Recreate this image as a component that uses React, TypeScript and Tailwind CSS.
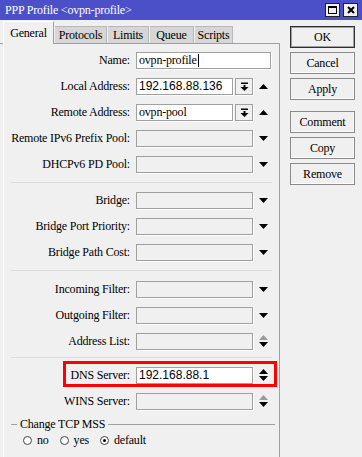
import React from "react"

type ArrowKind = "down" | "up" | "both" | "grayBoth" | "none"

function Down({ color = "#000" }: { color?: string }) {
  return (
    <svg width="9" height="5" viewBox="0 0 9 5">
      <polygon points="0,0 9,0 4.5,5" fill={color} />
    </svg>
  )
}

function Up({ color = "#000" }: { color?: string }) {
  return (
    <svg width="9" height="5" viewBox="0 0 9 5">
      <polygon points="0,5 9,5 4.5,0" fill={color} />
    </svg>
  )
}

function Arrows({ kind }: { kind: ArrowKind }) {
  return (
    <div className="ml-[3px] w-[14px] flex flex-col items-center justify-center gap-[2px]">
      {kind === "down" && <Down />}
      {kind === "up" && <Up />}
      {kind === "both" && (
        <>
          <Up />
          <Down />
        </>
      )}
      {kind === "grayBoth" && (
        <>
          <Up color="#9a9a9a" />
          <Down />
        </>
      )}
    </div>
  )
}

function DropButton() {
  return (
    <div className="ml-[2px] w-[18px] h-[17px] border border-[#a0a0a0] shadow-[1px_1px_0_#fff] flex items-center justify-center">
      <svg width="9" height="9" viewBox="0 0 9 9">
        <rect x="1" y="0.5" width="7" height="1.5" fill="#000" />
        <rect x="3.5" y="3" width="2" height="2.5" fill="#000" />
        <polygon points="0.5,5 8.5,5 4.5,9" fill="#000" />
      </svg>
    </div>
  )
}

interface RowProps {
  label: string
  value?: string
  sans?: boolean
  drop?: boolean
  arrows?: ArrowKind
  cursor?: boolean
}

function Row({ label, value, sans, drop, arrows = "down", cursor }: RowProps) {
  const filled = value !== undefined
  return (
    <div className="relative flex items-center h-[26px]">
      <div className="w-[126px] text-right whitespace-nowrap">{label}:</div>
      <div
        className={`ml-[6px] h-[17px] border border-[#a0a0a0] shadow-[1px_1px_0_#fff] flex items-center px-[2px] whitespace-nowrap overflow-hidden ${
          filled ? "bg-white" : "bg-[#f0f0f0]"
        } ${drop ? "w-[97px]" : arrows === "none" ? "w-[135px]" : "w-[117px]"} ${
          sans ? "font-['Liberation_Sans',sans-serif] tracking-normal" : ""
        }`}
      >
        {value}
        {cursor && <span className="inline-block w-px h-[13px] bg-black ml-px" />}
      </div>
      {drop && <DropButton />}
      {arrows !== "none" && <Arrows kind={arrows} />}
    </div>
  )
}

function Sep({ className }: { className: string }) {
  return <div className={`ml-[7px] w-[261px] h-px bg-[#dcdcdc] ${className}`} />
}

function Radio({ label, checked }: { label: string; checked?: boolean }) {
  return (
    <div className="flex items-center gap-[5px]">
      <div className="w-[9px] h-[9px] rounded-full border border-[#444] bg-white flex items-center justify-center">
        {checked && <div className="w-[3px] h-[3px] rounded-full bg-black" />}
      </div>
      <span>{label}</span>
    </div>
  )
}

function Btn({ label, primary }: { label: string; primary?: boolean }) {
  return (
    <div
      className={`w-[65px] h-[22px] flex items-center justify-center border ${
        primary
          ? "border-[#303030] shadow-[inset_0_0_0_1px_#a0a0a0]"
          : "border-[#8a8a8a] shadow-[inset_-1px_-1px_0_#fff]"
      }`}
    >
      {label}
    </div>
  )
}

export default function App() {
  const tabs = [
    { name: "Protocols", w: "w-[52px]" },
    { name: "Limits", w: "w-[41px]" },
    { name: "Queue", w: "w-[44px]" },
    { name: "Scripts", w: "w-[38px]" },
  ]
  return (
    <div className="w-[362px] h-[457px] bg-[#f0f0f0] text-black text-[12px] tracking-[-0.2px] font-['Liberation_Serif',serif] overflow-hidden flex flex-col leading-none">
      {/* Title bar */}
      <div className="h-[20px] bg-[#4c50c8] flex items-center pl-[5px] pr-[4px] text-white">
        <span>PPP Profile &lt;ovpn-profile&gt;</span>
        <div className="ml-auto flex gap-[3px]">
          <div className="w-[15px] h-[14px] bg-[#f0f0f0] border border-[#222] flex items-center justify-center">
            <div className="w-[9px] h-[8px] border border-black border-t-2" />
          </div>
          <div className="w-[15px] h-[14px] bg-[#f0f0f0] border border-[#222] flex items-center justify-center">
            <svg width="8" height="8" viewBox="0 0 8 8">
              <path d="M1 1 L7 7 M7 1 L1 7" stroke="#000" strokeWidth="2" />
            </svg>
          </div>
        </div>
      </div>

      <div className="flex flex-1">
        {/* Left: tabs and panel */}
        <div className="w-[280px] flex flex-col">
          <div className="flex items-end h-[24px] pl-[3px] border-b border-[#a0a0a0]">
            <div className="relative -mb-px h-[23px] w-[51px] bg-[#f0f0f0] border-t border-l border-white border-r border-r-[#a0a0a0] flex items-center justify-center">
              General
            </div>
            {tabs.map((t) => (
              <div
                key={t.name}
                className={`${t.w} ml-px h-[17px] bg-[#d6d6d6] border-t border-r border-[#b8b8b8] flex items-center justify-center`}
              >
                {t.name}
              </div>
            ))}
          </div>

          <div className="flex-1 ml-[3px] border-l border-white border-r border-r-[#a0a0a0] pt-[3px]">
            <Row label="Name" value="ovpn-profile" arrows="none" cursor />
            <Row label="Local Address" value="192.168.88.136" sans drop arrows="up" />
            <Row label="Remote Address" value="ovpn-pool" drop arrows="up" />
            <Row label="Remote IPv6 Prefix Pool" />
            <Row label="DHCPv6 PD Pool" />
            <Sep className="mt-[5px] mb-[4px]" />
            <Row label="Bridge" />
            <Row label="Bridge Port Priority" />
            <Row label="Bridge Path Cost" />
            <Sep className="mt-[5px] mb-[5px]" />
            <Row label="Incoming Filter" />
            <Row label="Outgoing Filter" />
            <Row label="Address List" arrows="grayBoth" />
            <Sep className="mt-[3px] mb-[4px]" />
            <div className="relative">
              <Row label="DNS Server" value="192.168.88.1" sans arrows="both" />
              <div className="absolute left-[59px] top-[-1px] w-[214px] h-[26px] border-[3px] border-[#ff0000]" />
            </div>
            <Row label="WINS Server" arrows="grayBoth" />

            {/* Change TCP MSS */}
            <div className="flex items-center h-[16px] mt-[2px]">
              <div className="ml-[7px] w-[6px] h-px bg-[#a0a0a0]" />
              <span className="px-[3px]">Change TCP MSS</span>
              <div className="w-[167px] h-px bg-[#a0a0a0]" />
            </div>
            <div className="flex items-center h-[16px] pl-[19px] gap-[11px]">
              <Radio label="no" />
              <Radio label="yes" />
              <Radio label="default" checked />
            </div>
          </div>
        </div>

        {/* Right: buttons */}
        <div className="flex flex-col pl-[10px] pt-[6px]">
          <Btn label="OK" primary />
          <div className="mt-[4px]">
            <Btn label="Cancel" />
          </div>
          <div className="mt-[4px]">
            <Btn label="Apply" />
          </div>
          <div className="mt-[11px]">
            <Btn label="Comment" />
          </div>
          <div className="mt-[4px]">
            <Btn label="Copy" />
          </div>
          <div className="mt-[4px]">
            <Btn label="Remove" />
          </div>
        </div>
      </div>
    </div>
  )
}
